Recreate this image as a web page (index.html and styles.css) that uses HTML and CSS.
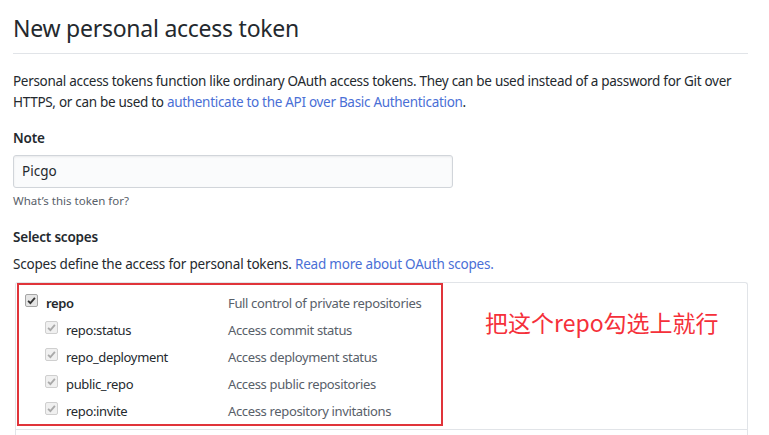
FILE: index.html
```html
<!DOCTYPE html>
<html>
<head>
<meta charset="utf-8">
<link rel="stylesheet" href="styles.css">
</head>
<body>
<div class="page">
  <h2 class="title">New personal access token</h2>
  <p class="intro">Personal access tokens function like ordinary OAuth access tokens. They can be used instead of a password for Git over HTTPS, or can be used to <a class="link">authenticate to the API over Basic Authentication</a>.</p>
  <div class="field">
    <div class="label">Note</div>
    <div class="input">Picgo</div>
    <div class="hint">What’s this token for?</div>
  </div>
  <div class="label scopes-label">Select scopes</div>
  <p class="scopes-desc">Scopes define the access for personal tokens. <a class="link">Read more about OAuth scopes.</a></p>
  <div class="scopes">
    <div class="group">
      <div class="row parent">
        <span class="cb on"><svg viewBox="0 0 12 12"><path d="M2.3 6.3 L4.8 8.8 L9.7 3.2" /></svg></span>
        <span class="name">repo</span>
        <span class="desc">Full control of private repositories</span>
      </div>
      <div class="row child">
        <span class="cb dis"><svg viewBox="0 0 12 12"><path d="M2.3 6.3 L4.8 8.8 L9.7 3.2" /></svg></span>
        <span class="name">repo:status</span>
        <span class="desc">Access commit status</span>
      </div>
      <div class="row child">
        <span class="cb dis"><svg viewBox="0 0 12 12"><path d="M2.3 6.3 L4.8 8.8 L9.7 3.2" /></svg></span>
        <span class="name">repo_deployment</span>
        <span class="desc">Access deployment status</span>
      </div>
      <div class="row child">
        <span class="cb dis"><svg viewBox="0 0 12 12"><path d="M2.3 6.3 L4.8 8.8 L9.7 3.2" /></svg></span>
        <span class="name">public_repo</span>
        <span class="desc">Access public repositories</span>
      </div>
      <div class="row child">
        <span class="cb dis"><svg viewBox="0 0 12 12"><path d="M2.3 6.3 L4.8 8.8 L9.7 3.2" /></svg></span>
        <span class="name">repo:invite</span>
        <span class="desc">Access repository invitations</span>
      </div>
      <div class="mark"></div>
      <div class="note">把这个repo勾选上就行</div>
    </div>
    <div class="group next"></div>
  </div>
</div>
</body>
</html>
```
FILE: styles.css
```css
html, body {
  margin: 0;
  padding: 0;
  background: #fff;
}
body {
  font-family: "Noto Sans", "Open Sans", "Liberation Sans", sans-serif;
  color: #24292e;
  font-size: 14px;
}
.page {
  padding: 0 21px 0 13px;
}
.title {
  margin: 0;
  padding-top: 12px;
  height: 54px;
  box-sizing: border-box;
  font-size: 23px;
  font-weight: 400;
  line-height: 32px;
  border-bottom: 1px solid #e1e4e8;
  letter-spacing: -0.25px;
}
.intro {
  margin: 17px 0 0;
  line-height: 21px;
  font-size: 13.5px;
  letter-spacing: -0.3px;
}
.link {
  color: #4a6fd6;
  text-decoration: none;
}
.field {
  margin-top: 15px;
}
.label {
  font-weight: 600;
  font-size: 13.5px;
  line-height: 20px;
  letter-spacing: -0.2px;
}
.input {
  margin-top: 7px;
  width: 440px;
  height: 33px;
  box-sizing: border-box;
  border: 1px solid #d1d5da;
  border-radius: 3px;
  background: #fafbfc;
  box-shadow: inset 0 1px 2px rgba(27,31,35,0.075);
  padding: 0 8px;
  line-height: 31px;
  font-size: 13.5px;
}
.hint {
  margin-top: 4px;
  font-size: 11.5px;
  color: #586069;
  line-height: 18px;
}
.scopes-label {
  margin-top: 17px;
}
.scopes-desc {
  margin: 7px 0 0;
  line-height: 20px;
  font-size: 13.5px;
  letter-spacing: -0.2px;
}
.scopes {
  margin: 8px 0 0 2px;
  border: 1px solid #e1e4e8;
  border-bottom: 0;
  border-radius: 3px 3px 0 0;
}
.group {
  position: relative;
  padding: 6px 0 5px;
  border-bottom: 1px solid #e1e4e8;
}
.group.next {
  height: 20px;
  padding: 0;
  border-bottom: 0;
}
.row {
  display: flex;
  align-items: center;
  height: 27px;
  font-size: 13px;
  letter-spacing: -0.35px;
}
.row.parent {
  padding-left: 9px;
}
.row.child {
  padding-left: 29px;
}
.cb {
  width: 11px;
  height: 11px;
  border: 1px solid #a5a5a5;
  border-radius: 2px;
  background: #e5e5e5;
  display: inline-flex;
  margin-top: -4px;
}
.cb svg {
  width: 11px;
  height: 11px;
}
.cb path {
  fill: none;
  stroke: #333;
  stroke-width: 2;
}
.cb.dis {
  border-color: #cfcfcf;
  background: #f0f0f0;
}
.cb.dis path {
  stroke: #a9a9a9;
}
.name {
  margin-left: 8px;
  color: #24292e;
}
.parent .name {
  font-weight: 600;
  width: 182px;
}
.child .name {
  width: 162px;
}
.desc {
  color: #586069;
}
.mark {
  position: absolute;
  left: 1px;
  top: 0;
  width: 426px;
  height: 143px;
  box-sizing: border-box;
  border: 2px solid #e0343a;
}
.note {
  position: absolute;
  left: 469px;
  top: 24px;
  font-family: "Noto Sans CJK SC", "Noto Sans", sans-serif;
  font-size: 23px;
  line-height: 30px;
  color: #f5303a;
}
```
